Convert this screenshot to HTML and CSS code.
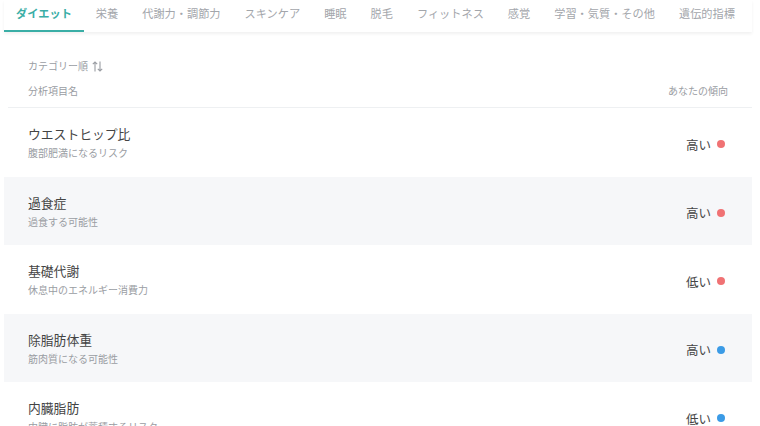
FILE: index.html
```html
<!DOCTYPE html>
<html lang="ja">
<head>
<meta charset="utf-8">
<link rel="stylesheet" href="styles.css">
</head>
<body>
<div class="page">
  <nav class="tabs">
    <span class="tab active">ダイエット</span>
    <span class="tab">栄養</span>
    <span class="tab">代謝力・調節力</span>
    <span class="tab">スキンケア</span>
    <span class="tab">睡眠</span>
    <span class="tab">脱毛</span>
    <span class="tab">フィットネス</span>
    <span class="tab">感覚</span>
    <span class="tab">学習・気質・その他</span>
    <span class="tab">遺伝的指標</span>
  </nav>
  <div class="head">
    <div class="sort">カテゴリー順
      <svg class="sort-icon" width="11" height="11" viewBox="0 0 11 11" fill="none" stroke="#9a9da3" stroke-width="1.1">
        <path d="M3 10.5V1M0.8 3.2L3 1L5.2 3.2"/>
        <path d="M8 0.5V10M5.8 7.8L8 10L10.2 7.8"/>
      </svg>
    </div>
    <div class="cols">
      <span>分析項目名</span>
      <span>あなたの傾向</span>
    </div>
  </div>
  <div class="list">
    <div class="row">
      <div class="info"><div class="title">ウエストヒップ比</div><div class="sub">腹部肥満になるリスク</div></div>
      <div class="val">高い<span class="dot red"></span></div>
    </div>
    <div class="row alt">
      <div class="info"><div class="title">過食症</div><div class="sub">過食する可能性</div></div>
      <div class="val">高い<span class="dot red"></span></div>
    </div>
    <div class="row">
      <div class="info"><div class="title">基礎代謝</div><div class="sub">休息中のエネルギー消費力</div></div>
      <div class="val">低い<span class="dot red"></span></div>
    </div>
    <div class="row alt">
      <div class="info"><div class="title">除脂肪体重</div><div class="sub">筋肉質になる可能性</div></div>
      <div class="val">高い<span class="dot blue"></span></div>
    </div>
    <div class="row">
      <div class="info"><div class="title">内臓脂肪</div><div class="sub">内臓に脂肪が蓄積するリスク</div></div>
      <div class="val">低い<span class="dot blue"></span></div>
    </div>
  </div>
</div>
</body>
</html>
```
FILE: styles.css
```css
html, body {
  margin: 0;
  padding: 0;
  background: #fff;
  font-family: "Noto Sans CJK JP", "Noto Sans", sans-serif;
  overflow: hidden;
}
.page {
  margin-left: 4px;
  width: 748px;
}
.tabs {
  display: flex;
  height: 32px;
  box-shadow: 0 2px 3px rgba(0, 0, 0, 0.06);
  white-space: nowrap;
}
.tab {
  box-sizing: border-box;
  height: 32px;
  padding: 4px 12px 0;
  line-height: 18px;
  font-size: 11.2px;
  color: #a3a6ab;
  border-bottom: 2px solid transparent;
}
.tab.active {
  color: #3aaea6;
  font-weight: bold;
  border-bottom-color: #3aaea6;
}
.head {
  padding: 26px 24px 8px 20px;
  border-bottom: 1px solid #eef0f2;
  margin-left: 4px;
}
.sort {
  display: flex;
  align-items: center;
  gap: 4px;
  font-size: 10px;
  line-height: 16px;
  color: #9a9da3;
}
.sort-icon {
  display: block;
}
.cols {
  display: flex;
  justify-content: space-between;
  margin-top: 9px;
  font-size: 10px;
  line-height: 16px;
  color: #9a9da3;
}
.row {
  display: flex;
  justify-content: space-between;
  align-items: center;
  padding: 17px 27px 15.5px 24px;
}
.row.alt {
  background: #f6f7f9;
}
.info {
  display: flex;
  flex-direction: column;
  gap: 2px;
}
.title {
  font-size: 12.8px;
  line-height: 18px;
  color: #444;
}
.sub {
  font-size: 10px;
  line-height: 16px;
  color: #9a9da3;
}
.val {
  display: flex;
  align-items: center;
  gap: 6px;
  font-size: 12.5px;
  color: #444;
  margin-top: 2px;
}
.dot {
  width: 8px;
  height: 8px;
  border-radius: 50%;
}
.dot.red { background: #f07274; }
.dot.blue { background: #3b9be6; }
```
